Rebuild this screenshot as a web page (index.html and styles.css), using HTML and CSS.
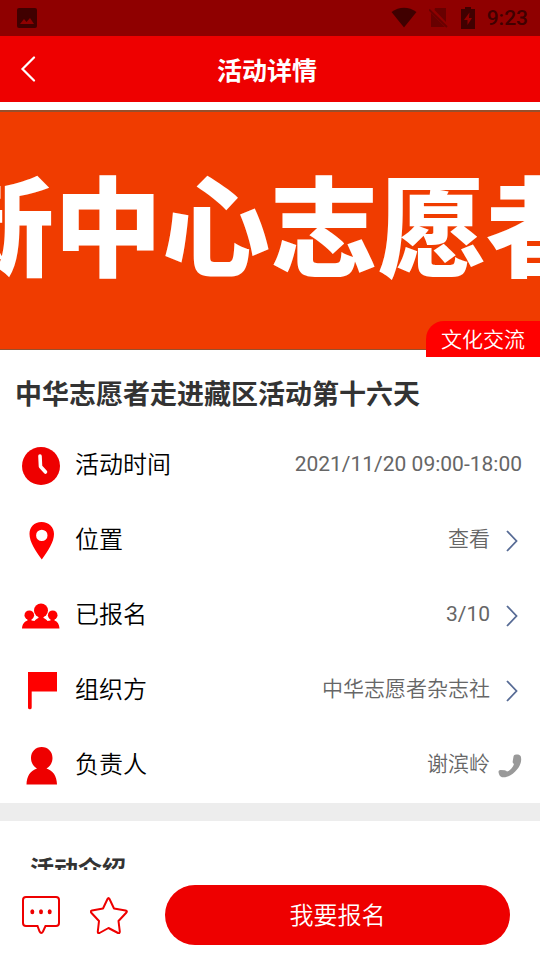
FILE: index.html
```html
<!DOCTYPE html>
<html lang="zh-CN">
<head>
<meta charset="utf-8">
<meta name="viewport" content="width=device-width, initial-scale=1">
<title>活动详情</title>
<link rel="stylesheet" href="styles.css">
</head>
<body>
<div class="status">
  <svg class="status-photo" width="20" height="20" viewBox="0 0 20 20"><rect width="20" height="20" rx="2" fill="#400000"/><path d="M3 16l4-5 2.500 3L13 10l4 6z" fill="#8f0000"/></svg>
  <div class="status-right">
    <svg width="26" height="22" viewBox="0 0 26 22"><path d="M.5 5C8-.8 18-.8 25.500 5L13 20.500z" fill="#400000"/></svg>
    <svg width="20" height="22" viewBox="0 0 20 22"><path d="M6 1h11v14L5.500 3zM2 6l14 14H2z" fill="#680000"/><path d="M0 2.500l18 17.500" stroke="#680000" stroke-width="1.800"/></svg>
    <svg width="14" height="22" viewBox="0 0 14 22"><path d="M0 2h4V0h6v2h4v20H0z" fill="#400000"/><path d="M8.500 5.500L3 13h3.500v5L11 11H8z" fill="#8f0000"/></svg>
    <span class="clock">9:23</span>
  </div>
</div>
<header class="nav">
  <button class="back" aria-label="返回"><svg width="16" height="26" viewBox="0 0 16 26"><path d="M14 1.500L2.500 13L14 24.500" fill="none" stroke="#fff" stroke-width="2.200" stroke-linecap="round"/></svg></button>
  <h1>活动详情</h1>
</header>
<main class="content">
  <div class="banner">
    <div class="banner-sign">新中心志愿者</div>
    <span class="tag">文化交流</span>
  </div>
  <h2 class="title">中华志愿者走进藏区活动第十六天</h2>
  <ul class="rows">
    <li class="row">
      <svg class="icon" viewBox="0 0 38 38"><circle cx="19" cy="19" r="19" fill="#ee0000"/><path d="M18 9l.5 10.500 5 5.500" fill="none" stroke="#fff" stroke-width="3.600" stroke-linecap="round" stroke-linejoin="round"/></svg>
      <span class="label">活动时间</span><span class="value">2021/11/20 09:00-18:00</span>
    </li>
    <li class="row">
      <svg class="icon" viewBox="0 0 38 38"><path fill-rule="evenodd" d="M19.500 0C12 0 7.500 5 7.500 12c0 8 6 17 12.300 25.500C26 29 32 20 32 12 32 5 27 0 19.500 0zm.3 7.700a5.700 5.700 0 1 1 0 11.400 5.700 5.700 0 0 1 0-11.400z" fill="#ff0000"/></svg>
      <span class="label">位置</span><a class="value" href="#map">查看<svg class="arrow" viewBox="0 0 12 22"><path d="M1 1l9.500 10L1 21" fill="none" stroke="#576b95" stroke-width="1.800"/></svg></a>
    </li>
    <li class="row">
      <svg class="icon" viewBox="0 0 38 38"><g fill="#ff0000"><circle cx="19" cy="13.500" r="7"/><circle cx="7.300" cy="18.200" r="4.800"/><circle cx="30.700" cy="18.200" r="4.800"/><path d="M0 31.500c.3-4.500 2.500-7 5.500-8v-2h4v2l3 .5c1-1.500 2.500-2.500 4-3v-2h5v2c1.500.5 3 1.500 4 3l3-.5v-2h4v2c3 1 4.700 3.500 5 8z"/></g></svg>
      <span class="label">已报名</span><a class="value" href="#members">3/10<svg class="arrow" viewBox="0 0 12 22"><path d="M1 1l9.500 10L1 21" fill="none" stroke="#576b95" stroke-width="1.800"/></svg></a>
    </li>
    <li class="row">
      <svg class="icon" viewBox="0 0 38 38"><path d="M6 0h29v19.500H9.700v16a1.800 1.800 0 0 1-3.700 0z" fill="#ff0000"/></svg>
      <span class="label">组织方</span><a class="value" href="#org">中华志愿者杂志社<svg class="arrow" viewBox="0 0 12 22"><path d="M1 1l9.500 10L1 21" fill="none" stroke="#576b95" stroke-width="1.800"/></svg></a>
    </li>
    <li class="row">
      <svg class="icon" viewBox="0 0 38 38"><path d="M19.700 0C13.500 0 9 4.700 9 11c0 4.500 2.300 8.500 6 10.500C8.500 23.500 4.700 29 4.500 37.500H35C34.800 29 31 23.500 24.500 21.500c3.700-2 6-6 6-10.500 0-6.300-4.500-11-10.800-11z" fill="#ee0000"/></svg>
      <span class="label">负责人</span><a class="value" href="#call">谢滨岭<svg class="phone" viewBox="0 0 24 24"><path d="M17 .8c2.300-.7 4.700-.4 5.700 1.400 1.200 3.600.3 8.800-3.700 13.300C15 20.500 9.500 24 4 23.200 2 22.800.8 20.500.5 18c0-1.500.8-2.200 2.200-2.100l4 .3c1 .1 1.800.5 2.300 1.300 3-.8 6-4 7-7.500-1-.6-1.500-1.300-1.300-2.400L15.500 2.500c.2-.9.700-1.500 1.500-1.700z" fill="#999"/></svg></a>
    </li>
  </ul>
  <section class="intro"><h3>活动介绍</h3></section>
</main>
<footer class="bar">
  <button class="tool" aria-label="评论"><svg width="38" height="38" viewBox="0 0 38 38"><path d="M4 1h30q3 0 3 3v23q0 3-3 3H23.500l-2.500 5.500q-1.700 3-3.400 0L15.500 30H4q-3 0-3-3V4q0-3 3-3z" fill="none" stroke="#ee0000" stroke-width="2"/><g fill="#ee0000"><ellipse cx="10.300" cy="15.700" rx="2" ry="2.500"/><ellipse cx="19" cy="15.700" rx="2" ry="2.500"/><ellipse cx="27.700" cy="15.700" rx="2" ry="2.500"/></g></svg></button>
  <button class="tool" aria-label="收藏"><svg width="38" height="38" viewBox="0 0 38 38"><path d="M17.500 3q1-2 2 0L24 12.500 35.500 14.500q2.300.6.700 2.200L28.500 25l1.300 10.500q0 2.200-1.800 1.500L18.500 32l-9 5q-1.800.7-1.700-1.500L9 25 1.300 16.700Q0 15 2 14.500L13 12.500z" fill="none" stroke="#ee0000" stroke-width="2" stroke-linejoin="round"/></svg></button>
  <button class="join">我要报名</button>
</footer>
</body>
</html>
```
FILE: styles.css
```css
* {
  box-sizing: border-box;
}

body {
  display: flex;
  flex-direction: column;
  height: 100vh;
  margin: 0;
  overflow: hidden;
  background: #fff;
  color: #000;
  font-family: Roboto, "Noto Sans CJK SC", sans-serif;
}

h1, h2, h3, ul {
  margin: 0;
  padding: 0;
}

button {
  padding: 0;
  border: 0;
  background: none;
  font-family: inherit;
}

svg {
  display: block;
  flex: none;
}

.status {
  display: flex;
  flex: none;
  align-items: center;
  justify-content: space-between;
  height: 36px;
  padding: 0 12px 0 17px;
  background: #8f0000;
}

.status-right {
  display: flex;
  align-items: center;
  gap: 12px;
}

.clock {
  color: #400000;
  font-size: 21px;
  font-weight: 500;
  line-height: 36px;
}

.nav {
  display: grid;
  flex: none;
  grid-template-columns: 60px 1fr 66px;
  align-items: center;
  height: 66px;
  background: #ee0000;
  color: #fff;
}

.back {
  padding-left: 20px;
}

.nav h1 {
  padding-top: 5px;
  font-size: 25px;
  font-weight: 700;
  line-height: 36px;
  text-align: center;
}

.content {
  flex: 1;
  min-height: 0;
  overflow: hidden;
}

.banner {
  position: relative;
  height: 255px;
  padding: 8px 0 7px;
}

.banner-sign {
  display: flex;
  align-items: center;
  justify-content: center;
  height: 100%;
  overflow: hidden;
  border: solid #96502d;
  border-width: 2px 0 1px;
  background: #f03c00;
  color: #fff;
  font-size: 108px;
  font-weight: 900;
  line-height: 160px;
  white-space: nowrap;
}

.tag {
  position: absolute;
  right: 0;
  bottom: 0;
  padding: 3px 15px 0;
  border-top-left-radius: 18px;
  background: #ff0000;
  color: #fff;
  font-size: 21px;
  font-weight: 350;
  line-height: 33px;
}

.title {
  padding: 21px 15px 15px;
  color: #333;
  font-size: 27px;
  font-weight: 700;
  line-height: 35px;
}

.rows {
  list-style: none;
}

.row {
  display: flex;
  align-items: center;
  height: 75px;
  padding: 0 18px 0 22px;
}

.icon {
  width: 38px;
  height: 38px;
}

.label {
  margin-left: 15px;
  padding-bottom: 1px;
  font-size: 24px;
  font-weight: 350;
  line-height: 36px;
}

.value {
  display: flex;
  align-items: center;
  margin-left: auto;
  padding-bottom: 3px;
  color: #666;
  font-family: Roboto, "Noto Sans CJK SC DemiLight", "Noto Sans CJK SC", sans-serif;
  font-size: 21px;
  line-height: 36px;
  text-decoration: none;
}

.arrow {
  width: 12px;
  height: 22px;
  margin: 4px 4px 0 16px;
}

.phone {
  width: 24px;
  height: 24px;
  margin: 4px 0 0 8px;
}

.intro {
  padding: 31px 30px;
  border-top: 18px solid #ededed;
}

.intro h3 {
  color: #333;
  font-size: 24px;
  font-weight: 700;
  line-height: 36px;
}

.bar {
  display: flex;
  flex: none;
  align-items: center;
  height: 90px;
  padding: 0 30px 0 22px;
  background: #fff;
}

.tool {
  flex: none;
  margin-right: 30px;
}

.join {
  flex: 1;
  height: 60px;
  margin-left: 7px;
  padding-bottom: 4px;
  border-radius: 30px;
  background: #ee0000;
  color: #fff;
  font-size: 24px;
  font-weight: 350;
}
```
